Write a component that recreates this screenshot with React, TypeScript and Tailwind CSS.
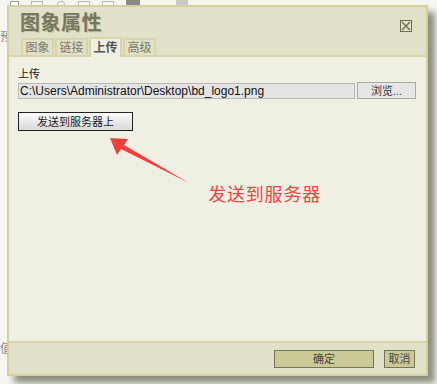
import { useState } from "react"

const cjk = { fontFamily: '"Liberation Sans", "Noto Sans CJK SC", sans-serif' }

const tabs = ["图象", "链接", "上传", "高级"]

const Toolbar = () => (
  <div className="absolute left-0 top-0 w-[437px] h-[40px]">
    <div className="absolute left-[10px] top-[1px] w-[9px] h-[9px] border border-[#9a9a9a] bg-white" />
    <div className="absolute left-[31px] top-[1px] w-[12px] h-[8px] border border-[#b5b5b5]" />
    <div className="absolute left-[57px] top-[1px] w-[8px] h-[6px] rounded-full border border-[#b5b5b5]" />
    <div className="absolute left-[78px] top-[1px] w-[12px] h-[8px] border border-[#b5b5b5]" />
    <div className="absolute left-[102px] top-[1px] w-[12px] h-[8px] border border-[#b5b5b5]" />
    <div className="absolute left-[126px] top-[0px] w-[14px] h-[6px] bg-[#8a8a8a]" />
    <div className="absolute left-[176px] top-[0px] w-[12px] h-[6px] bg-[#c8c8c8]" />
    <div className="absolute left-[0px] top-[28px] text-[12px] text-[#888]" style={cjk}>预</div>
    <div className="absolute left-[0px] top-[340px] text-[12px] text-[#888]" style={cjk}>值</div>
  </div>
)

const App = () => {
  const [activeTab, setActiveTab] = useState("上传")
  return (
    <div className="relative w-[437px] h-[384px] overflow-hidden bg-[#f6f6f1]" style={cjk}>
      <Toolbar />
      {/* window shadow */}
      <div className="absolute left-[14px] top-[12px] w-[421px] h-[371px] bg-[#8e8e80] blur-[3px]" />
      <div className="absolute left-[7px] top-[5px] w-[421px] h-[371px] flex flex-col border-2 border-[#d4d19d] bg-[#efefe3]">
        {/* header */}
        <div className="flex flex-col bg-[#e1e0c8] border-b-2 border-[#d7d5a6]">
          <div className="flex items-start justify-between pl-[11px] pr-[14px] pt-[4px] h-[30px]">
            <span className="text-[20px] font-bold leading-[24px] text-[#77765f] tracking-[0.5px]" style={{ textShadow: "1px 1px 0 #c8c6a4" }}>图象属性</span>
            <div className="mt-[9px] w-[12px] h-[12px] border border-[#6c6c50] flex items-center justify-center">
              <svg width="10" height="10" viewBox="0 0 10 10">
                <path d="M1 1 L9 9 M9 1 L1 9" stroke="#6c6c50" strokeWidth="1.3" />
              </svg>
            </div>
          </div>
          <div className="flex items-end gap-[1px] pl-[12px] h-[18px]">
            {tabs.map((t) => {
              const active = t === activeTab
              return (
                <button
                  key={t}
                  onClick={() => setActiveTab(t)}
                  className={
                    active
                      ? "w-[33px] h-[20px] -mb-[2px] border-2 border-b-0 border-[#d7d5a6] bg-[#efefe3] text-[12px] font-bold text-[#555] leading-[16px]"
                      : "w-[33px] h-[17px] border-2 border-b-0 border-[#d7d5a6] bg-[#e1e0c8] text-[12px] text-[#7a7a6a] leading-[14px]"
                  }
                >
                  {t}
                </button>
              )
            })}
          </div>
        </div>
        {/* body */}
        <div className="flex-1 flex flex-col px-[9px] pt-[10px]">
          <span className="text-[11px] leading-[14px] text-[#222]">上传</span>
          <div className="flex items-center gap-[2px] mt-[1px]">
            <div className="w-[337px] h-[16px] bg-[#e4e4e4] border border-[#b9b9b9] text-[12px] leading-[14px] text-[#111] px-[1px] overflow-hidden whitespace-nowrap">
              C:\Users\Administrator\Desktop\bd_logo1.png
            </div>
            <button className="w-[59px] h-[17px] bg-[#e6e6e6] border border-[#a9a9a9] text-[11px] leading-[14px] text-[#333]">浏览...</button>
          </div>
          <button className="mt-[13px] w-[115px] h-[19px] border border-[#222] bg-gradient-to-b from-[#fbfbfb] to-[#d9d9d9] text-[11px] leading-[16px] text-[#222]">发送到服务器上</button>
          <div className="flex justify-end pr-[96px] mt-[53px]">
            <span className="text-[18px] leading-[22px] tracking-[0.8px] text-[#f04545]">发送到服务器</span>
          </div>
        </div>
        {/* footer */}
        <div className="h-[33px] flex items-center justify-end gap-[10px] pr-[11px] bg-[#e1e0c8] border-t-2 border-[#d7d5a6]">
          <button className="w-[100px] h-[18px] bg-[#cbc995] border border-[#76765a] text-[11px] leading-[14px] text-[#444]">确定</button>
          <button className="w-[31px] h-[18px] bg-[#cbc995] border border-[#76765a] text-[11px] leading-[14px] text-[#444]">取消</button>
        </div>
      </div>
      {/* red arrow annotation */}
      <svg className="absolute left-0 top-0" width="437" height="384">
        <polygon points="110,138 128,139 124,145 189,183 121,149 117,155" fill="#ff3b3b" />
      </svg>
    </div>
  )
}

export default App
